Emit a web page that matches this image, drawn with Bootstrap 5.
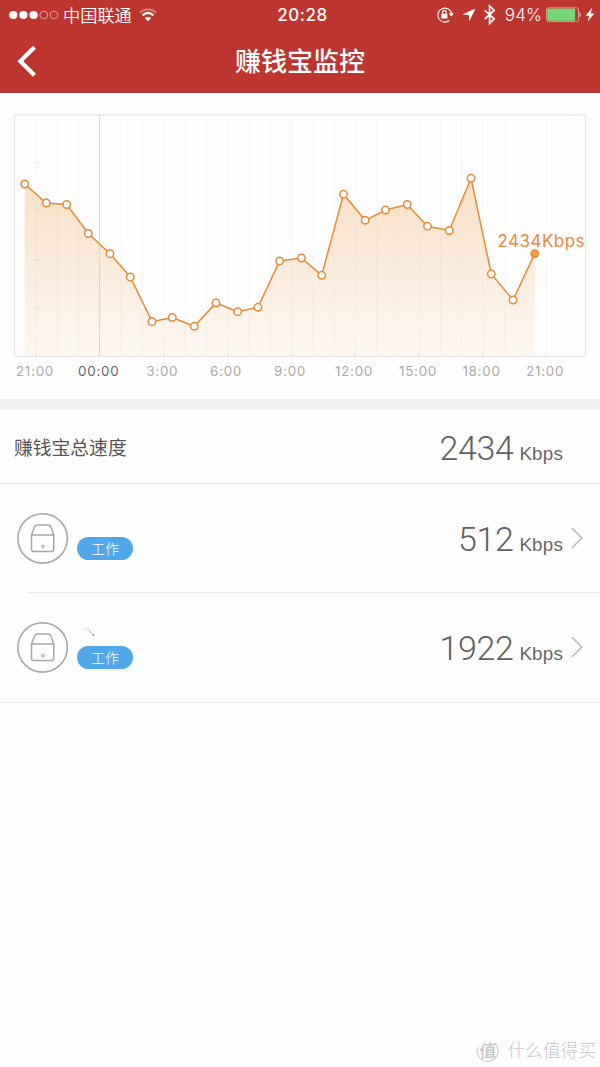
<!DOCTYPE html>
<html lang="zh-CN">
<head>
<meta charset="utf-8">
<meta name="viewport" content="width=device-width, initial-scale=1">
<title>赚钱宝监控</title>
<link href="https://cdn.jsdelivr.net/npm/bootstrap@5.3.0/dist/css/bootstrap.min.css" rel="stylesheet">
<style>
body{font-family:Inter,"Noto Sans CJK SC",sans-serif;color:#555;background:#fefefe;line-height:1;overflow:hidden}
.screen{width:600px;height:1067px}
.topbar{background:#bc352f;height:93px}
.status{height:30px;display:grid;grid-template-columns:1fr auto 1fr;padding:0 4px 0 9px}
.carrier{font-size:17.2px;font-weight:350;margin:0 7px 0 4px;padding-top:2px}
.clock{font-size:17px;font-weight:500;letter-spacing:.5px;padding:1px 0 0 0}
.percent{font-size:17px;font-weight:300;letter-spacing:.1px;padding-top:1px}
.titlebar{height:63px;display:grid;grid-template-columns:60px 1fr 60px}
.titlebar h1{font-size:26px;font-weight:500;padding-top:1px}
.titlebar svg{margin:-2px 0 0 16px}
.plot{height:306px}
.axis{font-size:13.4px;fill:#aaa;text-anchor:middle;letter-spacing:.75px}
.axis .midnight{fill:#666}
.band{height:11px;background:#f0f0f0}
.total{height:74px;border-bottom:1px solid #e8e8e8;padding:2px 37px 0 14px}
.total-name{font-size:18.8px;padding-top:3px}
.speed{font-family:Roboto,sans-serif;font-weight:300;font-size:34px;color:#606060;letter-spacing:-.4px}
.unit{font-family:"Liberation Sans",sans-serif;font-size:18.8px;color:#666;margin-left:6px;letter-spacing:.2px}
.device{height:109px;padding-left:17px;padding-right:17px}
.device>svg{margin-top:-1px}
.rule-inset{height:1px;margin-left:28px;margin-top:-1px;background:#ececec}
.rule-full{height:1px;background:#ececec}
.device-name{height:24px}
.device-info{padding-bottom:4px}
.state{background:#50a7ea;color:#fff;width:56px;height:23px;font-size:14px;font-weight:300;margin-left:9px}
.watermark{color:#c9c9c9;font-size:17.7px;font-weight:300;padding:0 4px 4px 0}
</style>
</head>
<body>
<main class="screen d-flex flex-column">
<header class="topbar text-white">
  <div class="status align-items-center">
    <div class="d-flex align-items-center">
      <svg width="50" height="10" viewBox="0 0 50 10"><g fill="#fff"><circle cx="4.3" cy="5" r="4.1"/><circle cx="14.4" cy="5" r="4.1"/><circle cx="24.6" cy="5" r="4.1"/></g><g fill="none" stroke="#e7a7a4" stroke-width=".9"><circle cx="34.8" cy="5" r="3.9"/><circle cx="45" cy="5" r="3.9"/></g></svg>
      <span class="carrier">中国联通</span>
      <svg width="18" height="14" viewBox="0 0 18 14" fill="none" stroke="#fff" stroke-width="1.8"><path d="M.8 4.5C5.5.2 12.5.2 17.2 4.5" stroke="#d7837f"/><path d="M3.6 7.4C7 4.3 11 4.3 14.4 7.4" stroke-width="2.2"/><path d="M9 13.3 5.8 10.1C7.6 8.5 10.4 8.5 12.2 10.1Z" fill="#fff" stroke="none"/></svg>
    </div>
    <div class="clock">20:28</div>
    <div class="d-flex align-items-center justify-content-end">
      <svg width="60" height="22" viewBox="437 4 60 22" fill="none" stroke="#fff"><path d="M451.6 13.3a7 7 0 1 0-2.3 7.2" stroke-width="1.1"/><path d="M448.8 13.2h5.2l-2.6 3.3z" fill="#fff" stroke="none"/><path d="M441.4 13.8h6v4.7h-6z" fill="#fff" stroke="none"/><path d="M442.6 14v-1.6a1.8 1.8 0 0 1 3.6 0V14" stroke-width="1.2"/><path d="M475.4 8.5 462.4 14.4 468.8 15 469.3 21.6Z" fill="#fff" stroke="none"/><path d="M484.7 10.4 494.2 18.8 489.6 23.5V6l4.6 4.5-9.5 8.6" stroke-width="1.7"/></svg>
      <span class="percent ms-2">94%</span>
      <svg class="ms-1" width="50" height="16" viewBox="545 7 50 16"><rect x="545.5" y="7.8" width="32" height="13.8" rx="2" fill="none" stroke="#df9995"/><path d="M546.3 8.6h27.8v12.2h-27.8z" fill="#75d775"/><path d="M578.6 12.2q2.5 2.5 0 5z" fill="#f3d4d2"/><path d="m591.2 7.8-6.6 8h3.6l-1.4 5.7 6.6-8.1h-3.7z" fill="#fff"/></svg>
    </div>
  </div>
  <div class="titlebar align-items-center">
    <svg width="20" height="32" viewBox="0 0 20 32" fill="none" stroke="#fff" stroke-width="4.2"><path d="M18.5 2.2 4.3 16.2l14.2 14"/></svg>
    <h1 class="mb-0 text-center">赚钱宝监控</h1>
  </div>
</header>

<svg class="plot w-100 flex-shrink-0" viewBox="0 93 600 306">
  <defs>
    <linearGradient id="area" gradientUnits="userSpaceOnUse" x1="0" y1="178" x2="0" y2="356"><stop offset="0" stop-color="#f8dfc5"/><stop offset="1" stop-color="#fef8f3"/></linearGradient>
    <pattern id="hours" patternUnits="userSpaceOnUse" x="35.6" y="115" width="21.28" height="242"><path d="M.5 0v242" stroke="#777" stroke-opacity=".05"/></pattern>
  </defs>
  <path d="M24.7 356V184L46.3 203 66.7 204.5 88.3 233.5 110 253.7 130.3 277 152 321.7 172.3 317.5 194.3 326.3 216 303 237.7 311.7 258 307.3 279.6 261 301.5 258 321.7 275.3 343.5 194.2 365.2 220.3 385.5 210 407.2 204.5 427.5 226.2 449.3 230.5 471 178.3 491.3 274 513 300 534.7 253.7V356Z" fill="url(#area)"/>
  <path d="M35 115h550v241H35z" fill="url(#hours)"/>
  <path d="M14.5 114.8H585.5V356.5H14.5z" fill="none" stroke="#e8e8e8" stroke-width="1.2"/>
  <path d="M99.5 115v241" stroke="#d9d7d5"/>
  <path d="M36 163h3m-3 48h3m-3 49h3m-3 48h3M36.5 354v3M163.5 354v3M227.5 354v3M291 354v3M355 354v3M418.5 354v3M482.5 354v3M546 354v3" stroke="#999" stroke-opacity=".28"/>
  <path d="M24.7 184 46.3 203 66.7 204.5 88.3 233.5 110 253.7 130.3 277 152 321.7 172.3 317.5 194.3 326.3 216 303 237.7 311.7 258 307.3 279.6 261 301.5 258 321.7 275.3 343.5 194.2 365.2 220.3 385.5 210 407.2 204.5 427.5 226.2 449.3 230.5 471 178.3 491.3 274 513 300 534.7 253.7" fill="none" stroke="#e68a37" stroke-width="1.5"/>
  <g fill="#fff" stroke="#e68a37" stroke-width="1.5"><circle cx="24.7" cy="184" r="3.7"/><circle cx="46.3" cy="203" r="3.7"/><circle cx="66.7" cy="204.5" r="3.7"/><circle cx="88.3" cy="233.5" r="3.7"/><circle cx="110" cy="253.7" r="3.7"/><circle cx="130.3" cy="277" r="3.7"/><circle cx="152" cy="321.7" r="3.7"/><circle cx="172.3" cy="317.5" r="3.7"/><circle cx="194.3" cy="326.3" r="3.7"/><circle cx="216" cy="303" r="3.7"/><circle cx="237.7" cy="311.7" r="3.7"/><circle cx="258" cy="307.3" r="3.7"/><circle cx="279.6" cy="261" r="3.7"/><circle cx="301.5" cy="258" r="3.7"/><circle cx="321.7" cy="275.3" r="3.7"/><circle cx="343.5" cy="194.2" r="3.7"/><circle cx="365.2" cy="220.3" r="3.7"/><circle cx="385.5" cy="210" r="3.7"/><circle cx="407.2" cy="204.5" r="3.7"/><circle cx="427.5" cy="226.2" r="3.7"/><circle cx="449.3" cy="230.5" r="3.7"/><circle cx="471" cy="178.3" r="3.7"/><circle cx="491.3" cy="274" r="3.7"/><circle cx="513" cy="300" r="3.7"/><circle cx="534.7" cy="253.7" r="3.7" fill="#f39a46"/></g>
  <text x="497.5" y="246.5" font-size="17" fill="#e68a37" textLength="87">2434Kbps</text>
  <g class="axis"><text x="35" y="376">21:00</text><text class="midnight" x="98.7" y="376">00:00</text><text x="162.3" y="376">3:00</text><text x="226" y="376">6:00</text><text x="290" y="376">9:00</text><text x="354" y="376">12:00</text><text x="418" y="376">15:00</text><text x="481.5" y="376">18:00</text><text x="545.2" y="376">21:00</text></g>
</svg>
<div class="band flex-shrink-0"></div>

<section class="total d-flex align-items-center justify-content-between">
  <span class="total-name">赚钱宝总速度</span>
  <div class="d-flex align-items-baseline"><span class="speed">2434</span><span class="unit">Kbps</span></div>
</section>

<section class="device d-flex align-items-center">
  <svg width="51" height="52" viewBox="0 0 51 52" fill="none" stroke="#a8a8a8" stroke-width="1.6"><circle cx="25.6" cy="26.4" r="24.7"/><path d="M14.5 23 17.4 15.2Q18.2 13 20.2 13H31.2Q33.2 13 34 15.2L36.8 23V37Q36.8 39.6 34.2 39.6H17.1Q14.5 39.6 14.5 37ZM14.5 23H36.8" stroke-width="1.5"/><circle cx="25.9" cy="34.6" r="1.5" fill="#ccc" stroke-width=".7"/></svg>
  <div class="device-info flex-grow-1"><div class="device-name"></div><div class="state rounded-pill d-flex align-items-center justify-content-center">工作</div></div>
  <div class="d-flex align-items-baseline"><span class="speed">512</span><span class="unit">Kbps</span></div>
  <svg class="ms-2" width="12" height="22" viewBox="0 0 12 22" fill="none" stroke="#bbb" stroke-width="1.7"><path d="m.8 1 10 10-10 10"/></svg>
</section>
<div class="rule-inset flex-shrink-0"></div>
<section class="device d-flex align-items-center">
  <svg width="51" height="52" viewBox="0 0 51 52" fill="none" stroke="#a8a8a8" stroke-width="1.6"><circle cx="25.6" cy="26.4" r="24.7"/><path d="M14.5 23 17.4 15.2Q18.2 13 20.2 13H31.2Q33.2 13 34 15.2L36.8 23V37Q36.8 39.6 34.2 39.6H17.1Q14.5 39.6 14.5 37ZM14.5 23H36.8" stroke-width="1.5"/><circle cx="25.9" cy="34.6" r="1.5" fill="#ccc" stroke-width=".7"/></svg>
  <div class="device-info flex-grow-1"><div class="device-name"><svg class="d-block" width="30" height="15" viewBox="0 0 30 15"><path d="m15 6 6-1 4.5 8z" fill="#eee"/><path d="m21 9 4 3" stroke="#bbb"/><circle cx="25.3" cy="13" r="1" fill="#888"/></svg></div><div class="state rounded-pill d-flex align-items-center justify-content-center">工作</div></div>
  <div class="d-flex align-items-baseline"><span class="speed">1922</span><span class="unit">Kbps</span></div>
  <svg class="ms-2" width="12" height="22" viewBox="0 0 12 22" fill="none" stroke="#bbb" stroke-width="1.7"><path d="m.8 1 10 10-10 10"/></svg>
</section>
<div class="rule-full flex-shrink-0"></div>

<footer class="watermark mt-auto d-flex align-items-center justify-content-end">
  <svg class="me-2" width="24" height="24" viewBox="0 0 24 24"><path d="M19 4.5a10.5 10.5 0 1 1-17 3.500" fill="none" stroke="#d0d0d0" stroke-width="1.2"/><text x="12" y="18" font-size="17" font-weight="500" text-anchor="middle" fill="#c4c4c4" transform="rotate(-5 12 12) skewX(-6) translate(1 0)">值</text></svg>
  <span>什么值得买</span>
</footer>
</main>
<script src="https://cdn.jsdelivr.net/npm/bootstrap@5.3.0/dist/js/bootstrap.bundle.min.js"></script>
</body>
</html>
